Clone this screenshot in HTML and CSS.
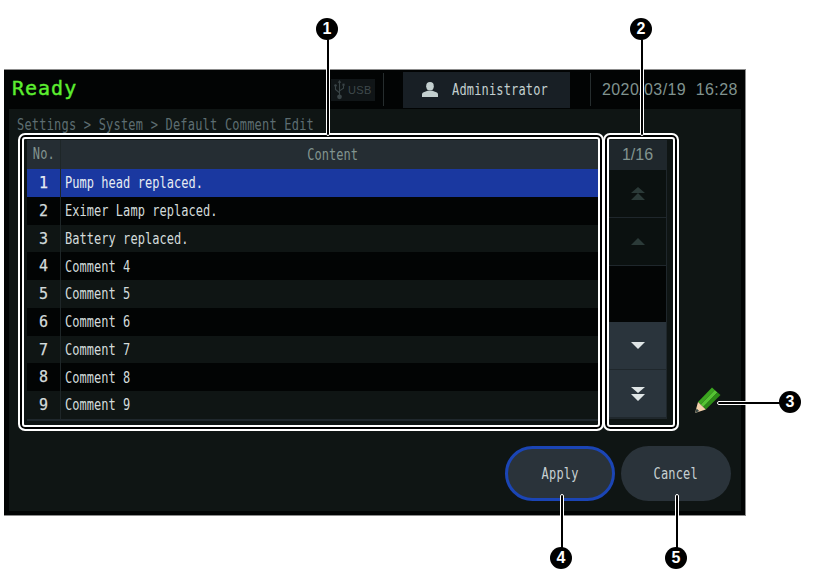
FILE: index.html
```html
<!DOCTYPE html>
<html lang="en">
<head>
    <meta charset="UTF-8">
    <meta name="viewport" content="width=device-width, initial-scale=1.0">
    <title>Default Comment Edit</title>
    <link rel="stylesheet" href="styles.css">
</head>
<body>

<div class="figure">
    <div class="screen">
        <!-- Status bar -->
        <div class="topbar">
            <div class="status">Ready</div>
            <div class="usb">
                <svg class="usb-icon" viewBox="0 0 12 22" width="11" height="20">
                    <path d="M6 0 L8 3 L6.6 3 L6.6 17 L5.4 17 L5.4 3 L4 3 Z" fill="#3a4447"/>
                    <path d="M6 14 L1.6 10.5 L1.6 7 M6 12 L10.4 9 L10.4 6" fill="none" stroke="#3a4447" stroke-width="1.2"/>
                    <circle cx="1.6" cy="6" r="1.4" fill="#3a4447"/>
                    <rect x="9.2" y="4" width="2.4" height="2.4" fill="#3a4447"/>
                    <circle cx="6" cy="18.5" r="2.6" fill="#3a4447"/>
                </svg>
                <span>USB</span>
            </div>
            <div class="divider"></div>
            <div class="user">
                <svg class="user-icon" viewBox="0 0 16 15" width="16" height="15">
                    <ellipse cx="8" cy="4.200" rx="3.800" ry="4.200" fill="#c3cfcf"/>
                    <path d="M0 15 L0 12.500 Q0 10.400 3 9.800 L5.600 8.800 L10.400 8.800 L13 9.800 Q16 10.400 16 12.500 L16 15 Z" fill="#c3cfcf"/>
                </svg>
                <span class="narrow">Administrator</span>
            </div>
            <div class="divider divider-right"></div>
            <div class="clock">2020/03/19  16:28</div>
        </div>

        <div class="panel">
            <div class="breadcrumb"><span class="narrow">Settings &gt; System &gt; Default Comment Edit</span></div>

            <div class="list-area">
                <div class="comment-table">
                    <div class="row head"><div class="no"><span class="narrow">No.</span></div><div class="content">Content</div></div>
                    <div class="row selected"><div class="no">1</div><div class="content">Pump head replaced.</div></div>
                    <div class="row"><div class="no">2</div><div class="content">Eximer Lamp replaced.</div></div>
                    <div class="row"><div class="no">3</div><div class="content">Battery replaced.</div></div>
                    <div class="row"><div class="no">4</div><div class="content">Comment 4</div></div>
                    <div class="row"><div class="no">5</div><div class="content">Comment 5</div></div>
                    <div class="row"><div class="no">6</div><div class="content">Comment 6</div></div>
                    <div class="row"><div class="no">7</div><div class="content">Comment 7</div></div>
                    <div class="row"><div class="no">8</div><div class="content">Comment 8</div></div>
                    <div class="row"><div class="no">9</div><div class="content">Comment 9</div></div>
                </div>

                <div class="pager">
                    <div class="page-count">1/16</div>
                    <div class="page-btn off">
                        <svg viewBox="0 0 14 14" width="14" height="14"><path d="M7 0 L14 6 L0 6 Z M7 6 L14 13 L0 13 Z" fill="#2b3a38"/></svg>
                    </div>
                    <div class="page-btn off">
                        <svg viewBox="0 0 14 8" width="14" height="8"><path d="M7 0 L14 7 L0 7 Z" fill="#2b3a38"/></svg>
                    </div>
                    <div class="page-track"></div>
                    <div class="page-btn on">
                        <svg viewBox="0 0 14 8" width="14" height="8"><path d="M0 0 L14 0 L7 7 Z" fill="#dfe5e6"/></svg>
                    </div>
                    <div class="page-btn on">
                        <svg viewBox="0 0 14 14" width="14" height="14"><path d="M0 0 L14 0 L7 6 Z M0 7 L14 7 L7 14 Z" fill="#dfe5e6"/></svg>
                    </div>
                </div>

                <svg class="pencil" viewBox="0 0 27 27" width="27" height="27">
                    <path d="M18 0.500 L20.700 3 L6.700 17.500 L4 15 Z" fill="#3ba51f"/>
                    <path d="M20.700 3 L23.500 5.400 L9.300 20 L6.700 17.500 Z" fill="#55c433"/>
                    <path d="M23.500 5.400 L26.500 8 L11.800 22.500 L9.300 20 Z" fill="#2c8a16"/>
                    <path d="M4 15 L11.800 22.500 L1 26 Z" fill="#f2d0aa"/>
                    <path d="M2.600 21.500 L5.200 24 L1 26 Z" fill="#3a4a48"/>
                </svg>
            </div>

            <div class="actions">
                <div class="pill primary"><span class="narrow">Apply</span></div>
                <div class="pill"><span class="narrow">Cancel</span></div>
            </div>
        </div>
    </div>
</div>

<!-- Callouts drawn over the screenshot -->
<div class="frame frame-list"></div>
<div class="frame frame-pager"></div>

<div class="leader v" style="left:326px;top:38px;height:96px"></div>
<div class="leader v" style="left:640px;top:38px;height:96px"></div>
<div class="leader h" style="left:717px;top:401px;width:64px"></div>
<div class="leader v" style="left:560px;top:494px;height:56px"></div>
<div class="leader v" style="left:675px;top:494px;height:56px"></div>

<div class="badge" style="left:316px;top:18px">1</div>
<div class="badge" style="left:630px;top:18px">2</div>
<div class="badge" style="left:779px;top:391px">3</div>
<div class="badge" style="left:550px;top:547px">4</div>
<div class="badge" style="left:665px;top:547px">5</div>

</body>
</html>
```

FILE: styles.css
```css
html, body { margin: 0; padding: 0; background-color: #fff; }
body { width: 814px; height: 572px; overflow: hidden; position: relative; font-family: "DejaVu Sans Mono", monospace; }

.figure { padding: 69px 0 0 4px; }
.screen { width: 742px; height: 447px; box-sizing: border-box; border: 1px solid #8c8c8c; border-left: 0; background-color: #020404; display: flex; flex-direction: column; }

/* the screen font is a tall, narrow mono: squeeze DejaVu to get there */
.narrow { display: inline-block; font-size: 15px; letter-spacing: 0.2px; transform: scaleX(0.8); white-space: nowrap; }

.topbar { height: 39px; display: flex; align-items: center; flex: none; }
.status { width: 327px; padding: 0 0 3px 8px; box-sizing: border-box; color: #5cee30; font-size: 20px; letter-spacing: 1px; -webkit-text-stroke: 0.4px #5cee30; }
.usb { width: 44px; height: 22px; background-color: #101517; display: flex; align-items: center; gap: 3px; padding-left: 3px; box-sizing: border-box; color: #3f494c; font-family: "Liberation Sans", sans-serif; font-size: 11px; }
.usb span { letter-spacing: 0.3px; }
.divider { width: 1px; height: 33px; background-color: #262d2e; margin-left: 8px; }
.user { width: 167px; height: 36px; margin-left: 19px; padding-left: 19px; box-sizing: border-box; background-color: #181f25; display: flex; align-items: center; gap: 14px; color: #c3cfcf; overflow: hidden; }
.user-icon { flex: none; }
.user .narrow { flex: none; transform-origin: left center; }
.divider-right { margin-left: 20px; }
.clock { margin-left: 11px; color: #80938f; font-family: "Liberation Sans", sans-serif; font-size: 16px; letter-spacing: 0.4px; white-space: pre; }

.panel { flex: 1; margin: 0 4px 4px 5px; background-color: #0f1514; padding-left: 8px; display: flex; flex-direction: column; }
.breadcrumb { height: 31px; padding: 6px 0 0 0; box-sizing: border-box; color: #5d6d71; }
.breadcrumb .narrow { letter-spacing: 0.25px; transform-origin: left center; }

.list-area { display: flex; align-items: flex-start; gap: 10px; padding-left: 10px; }
.comment-table { width: 571px; background-color: #1f272c; padding-bottom: 2px; }
.row { display: flex; height: 27.750px; align-items: center; background-color: #020404; color: #d3dbdb; font-size: 15px; }
.row:nth-child(even) { background-color: #0f1514; }
.row.head { background-color: #252d33; color: #82948f; height: 29px; }
.row.selected { background-color: #1a38a0; color: #e6ecf2; }
.no { width: 33px; height: 100%; border-right: 1px solid #1e2628; text-align: center; line-height: 29px; flex: none; -webkit-text-stroke: 0.25px currentColor; }
.head .no { -webkit-text-stroke: 0; }
.content { flex: 1; padding: 1px 0 0 5px; line-height: 28px; letter-spacing: 0.05px; transform: scaleX(0.8); transform-origin: 0 center; white-space: nowrap; }
.head .content { text-align: center; padding-left: 8px; transform-origin: center; }

.pager { width: 59px; height: 279px; background-color: #1f272c; display: flex; flex-direction: column; align-items: center; }
.page-count { height: 30px; line-height: 29px; color: #82948f; font-family: "Liberation Sans", sans-serif; font-size: 16px; flex: none; }
.page-btn { width: 57px; height: 47px; margin-bottom: 1px; display: flex; align-items: center; justify-content: center; flex: none; }
.page-btn.off { background-color: #0b1110; }
.page-btn.on { background-color: #2a343c; }
.page-track { width: 57px; height: 56px; background-color: #030505; flex: none; }

.pencil { margin: 247px 0 0 17px; flex: none; }

.actions { display: flex; justify-content: flex-end; gap: 6px; padding: 25px 10px 0 0; }
.pill { width: 110px; height: 55px; box-sizing: border-box; padding-top: 2px; border-radius: 28px; background-color: #2a333a; color: #c6d0d2; display: flex; align-items: center; justify-content: center; }
.pill.primary { border: 3px solid #1b45b5; }

.frame { position: absolute; box-sizing: border-box; border: 2px solid #fff; border-radius: 7px; box-shadow: inset 0 0 0 2px #000, inset 0 0 0 4px #fff; }
.frame-list { left: 18px; top: 133px; width: 586px; height: 298px; }
.frame-pager { left: 603px; top: 133px; width: 76px; height: 298px; }

.leader { position: absolute; background-color: #000; box-sizing: content-box; border: 1px solid #fff; border-radius: 2px; }
.leader.v { width: 2px; }
.leader.h { height: 2px; }

.badge { position: absolute; width: 22px; height: 22px; border-radius: 50%; background-color: #000; color: #fff; font-family: "Liberation Sans", sans-serif; font-weight: bold; font-size: 16px; line-height: 22px; text-align: center; }
```
